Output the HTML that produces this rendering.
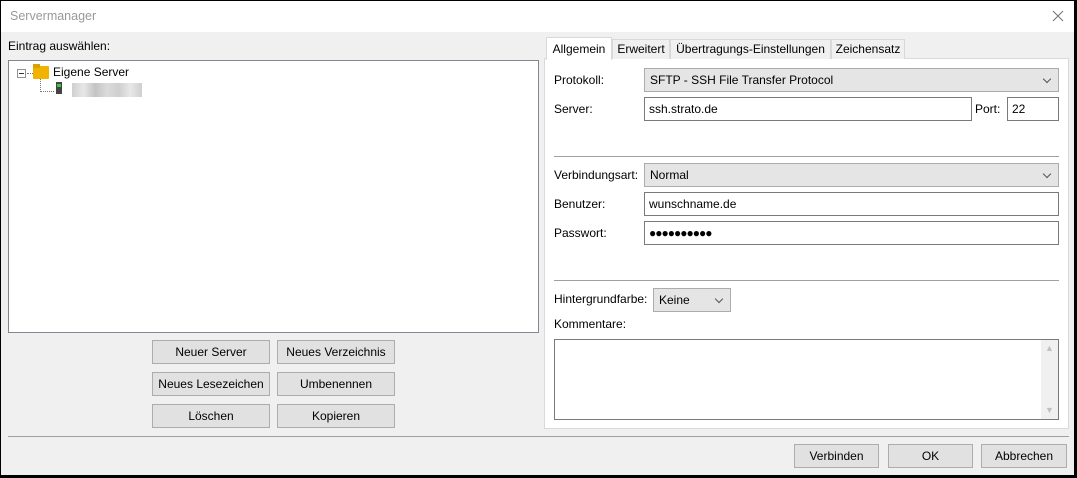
<!DOCTYPE html>
<html><head><meta charset="utf-8"><style>
*{box-sizing:border-box;margin:0;padding:0}
body{width:1077px;height:478px;background:#000;font-family:"Liberation Sans",sans-serif;font-size:12px;color:#000;overflow:hidden;position:relative}
.win{position:absolute;left:1px;top:1px;width:1073px;height:474px;background:#f0f0f0}
.title{position:absolute;left:0;top:0;width:1073px;height:31px;background:#fff}
.a{position:absolute;white-space:nowrap}
.btn{position:absolute;background:#e1e1e1;border:1px solid #adadad;text-align:center;line-height:22px;height:24px}
.inp{position:absolute;background:#fff;border:1px solid #7a7a7a;height:24px;line-height:22px;padding-left:4px}
.sel{position:absolute;background:#e5e5e5;border:1px solid #acacac;height:24px;line-height:22px;padding-left:5px}
.sel:after{content:"";position:absolute;right:8px;top:7px;width:5px;height:5px;border-right:1px solid #555;border-bottom:1px solid #555;transform:rotate(45deg)}
.hr{position:absolute;height:1px;background:#a0a0a0}
.tab{position:absolute;top:38px;height:20px;background:#f0f0f0;border:1px solid #d9d9d9;border-bottom:none;line-height:19px;text-align:center}
</style></head><body>
<div class="win">
<div class="title"><span class="a" style="left:9px;top:8px;color:#999;font-size:12.5px">Servermanager</span>
<svg class="a" style="left:1051px;top:9px" width="12" height="12"><path d="M1 1L11 11M11 1L1 11" stroke="#777" stroke-width="1.1"/></svg></div>
<span class="a" style="left:7px;top:38px">Eintrag auswählen:</span>
<div class="a" style="left:7px;top:59px;width:531px;height:273px;background:#fff;border:1px solid #828790"></div>
<div class="a" style="left:16px;top:68px;width:9px;height:9px;border:1px solid #919191;background:#fff"></div>
<div class="a" style="left:18px;top:72px;width:5px;height:1px;background:#333"></div>
<div class="a" style="left:26px;top:72px;width:6px;border-top:1px dotted #777"></div>
<div class="a" style="left:39px;top:78px;height:13px;border-left:1px dotted #777"></div>
<div class="a" style="left:39px;top:90px;width:14px;border-top:1px dotted #777"></div>
<div class="a" style="left:32px;top:65px;width:16px;height:13px;background:#f0b400;border-radius:1px"></div>
<div class="a" style="left:32px;top:63px;width:7px;height:4px;background:#dca000"></div>
<span class="a" style="left:52px;top:64px">Eigene Server</span>
<div class="a" style="left:55px;top:81px;width:6px;height:12px;background:#444"></div>
<div class="a" style="left:56px;top:83px;width:4px;height:3px;background:#3c3"></div>
<div class="a" style="left:71px;top:82px;width:70px;height:14px;background:linear-gradient(90deg,#bbb,#ddd,#aaa,#ccc,#bbb,#ddd,#bbb);opacity:.7"></div>
<div class="btn" style="left:151px;top:339px;width:118px">Neuer Server</div>
<div class="btn" style="left:276px;top:339px;width:118px">Neues Verzeichnis</div>
<div class="btn" style="left:151px;top:371px;width:118px">Neues Lesezeichen</div>
<div class="btn" style="left:276px;top:371px;width:118px">Umbenennen</div>
<div class="btn" style="left:151px;top:403px;width:118px">Löschen</div>
<div class="btn" style="left:276px;top:403px;width:118px">Kopieren</div>
<div class="a" style="left:543px;top:57px;width:525px;height:371px;background:#fff;border:1px solid #d9d9d9"></div>
<div class="tab" style="left:545px;top:36px;width:66px;height:23px;background:#fff;line-height:22px">Allgemein</div>
<div class="tab" style="left:611px;width:58px">Erweitert</div>
<div class="tab" style="left:669px;width:161px">Übertragungs-Einstellungen</div>
<div class="tab" style="left:830px;width:74px">Zeichensatz</div>
<span class="a" style="left:553px;top:72px">Protokoll:</span>
<div class="sel" style="left:643px;top:67px;width:415px">SFTP - SSH File Transfer Protocol</div>
<span class="a" style="left:553px;top:101px">Server:</span>
<div class="inp" style="left:643px;top:96px;width:328px">ssh.strato.de</div>
<span class="a" style="left:974px;top:101px">Port:</span>
<div class="inp" style="left:1006px;top:96px;width:52px">22</div>
<div class="hr" style="left:553px;top:155px;width:505px"></div>
<span class="a" style="left:553px;top:167px">Verbindungsart:</span>
<div class="sel" style="left:643px;top:162px;width:415px">Normal</div>
<span class="a" style="left:553px;top:196px">Benutzer:</span>
<div class="inp" style="left:643px;top:191px;width:415px">wunschname.de</div>
<span class="a" style="left:553px;top:225px">Passwort:</span>
<div class="inp" style="left:643px;top:220px;width:415px;letter-spacing:-1px">●●●●●●●●●●</div>
<div class="hr" style="left:553px;top:279px;width:505px"></div>
<span class="a" style="left:553px;top:291px">Hintergrundfarbe:</span>
<div class="sel" style="left:652px;top:287px;width:78px">Keine</div>
<span class="a" style="left:553px;top:316px">Kommentare:</span>
<div class="a" style="left:553px;top:338px;width:505px;height:81px;background:#fff;border:1px solid #7a7a7a"></div>
<div class="a" style="left:1040px;top:339px;width:17px;height:79px;background:#f0f0f0"></div>
<span class="a" style="left:1044px;top:342px;color:#c0c0c0;font-size:9px">▲</span>
<span class="a" style="left:1044px;top:404px;color:#c0c0c0;font-size:9px">▼</span>
<div class="hr" style="left:7px;top:435px;width:1061px"></div>
<div class="btn" style="left:793px;top:443px;width:85px">Verbinden</div>
<div class="btn" style="left:887px;top:443px;width:85px">OK</div>
<div class="btn" style="left:980px;top:443px;width:86px">Abbrechen</div>
</div>
</body></html>
